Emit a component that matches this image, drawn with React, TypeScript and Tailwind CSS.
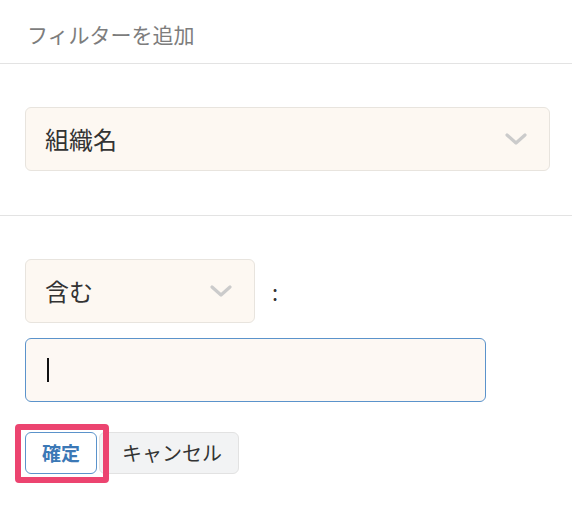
const font = { fontFamily: '"Noto Sans CJK JP", "Noto Sans", sans-serif' };

function Chevron() {
  return (
    <svg width="22" height="13" viewBox="0 0 22 13" fill="none">
      <path d="M2 2 L11 10 L20 2" stroke="#cbcbcb" strokeWidth="3.2" strokeLinecap="round" strokeLinejoin="round" />
    </svg>
  );
}

function SelectBox({ label, className }: { label: string; className: string }) {
  return (
    <div
      className={`flex h-[64px] items-center justify-between rounded-[6px] border border-[#e8e4de] bg-[#fdf8f2] pl-[19px] ${className}`}
    >
      <span className="text-[24px] leading-none text-[#333]">{label}</span>
      <Chevron />
    </div>
  );
}

export default function App() {
  return (
    <div className="w-[572px] h-[516px] bg-white" style={font}>
      {/* Header */}
      <div className="h-[64px] border-b border-[#e3e3e3] pl-[27px] pt-[24px]">
        <span className="text-[21px] leading-none text-[#7d7d7d]">フィルターを追加</span>
      </div>

      {/* Field */}
      <div className="border-b border-[#e3e3e3] pl-[25px] pr-[22px] pt-[43px] pb-[44px]">
        <SelectBox label="組織名" className="pr-[22px]" />
      </div>

      {/* Condition */}
      <div className="pl-[25px] pt-[43px]">
        <div className="flex items-center">
          <SelectBox label="含む" className="w-[230px] pr-[22px]" />
          <span className="ml-[17px] text-[22px] leading-none text-[#333]">:</span>
        </div>
        <div className="mt-[15px] flex h-[64px] w-[461px] items-center rounded-[6px] border border-[#5b93cb] bg-[#fdf8f3] pl-[21px]">
          <div className="h-[24px] w-[2px] bg-[#111]" />
        </div>

        <div className="relative mt-[30px] flex h-[42px] items-center">
          <button className="relative z-0 h-[42px] w-[72px] rounded-[6px] border border-[#5b93cb] bg-white pt-[1px] text-[19px] font-bold text-[#3b78b6]" style={font}>
            確定
          </button>
          <button className="ml-[2px] h-[42px] w-[140px] rounded-[6px] border border-[#e2e2e2] bg-[#f2f3f4] pl-[6px] text-[20px] text-[#333]" style={font}>
            キャンセル
          </button>
          <div className="pointer-events-none absolute left-[-10px] top-[-8px] h-[59px] w-[94px] rounded-[4px] border-[6px] border-[#ec4470]" />
        </div>
      </div>
    </div>
  );
}
